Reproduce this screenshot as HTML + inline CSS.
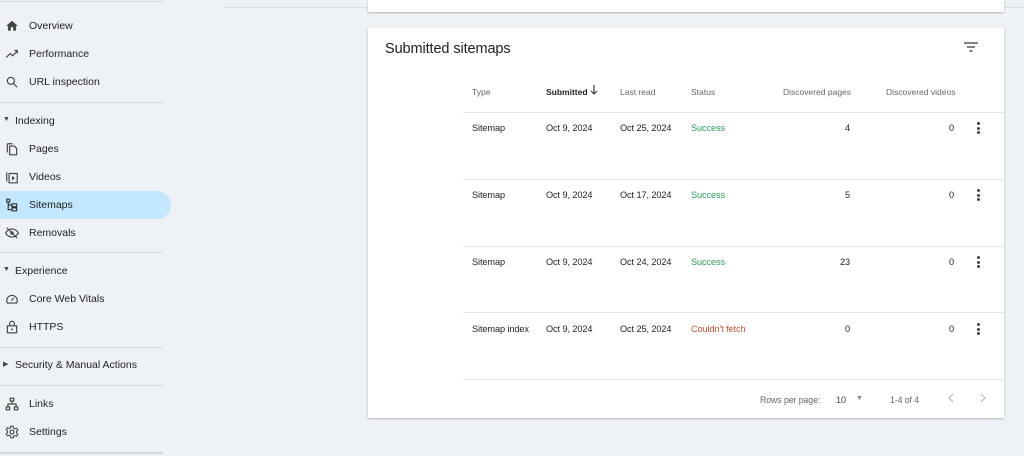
<!DOCTYPE html>
<html><head><meta charset="utf-8"><style>
*{margin:0;padding:0;box-sizing:border-box}
body{width:1024px;height:456px;overflow:hidden;background:#eef2f6;font-family:"Liberation Sans",Arial,sans-serif;color:#1f1f1f;position:relative}
.side{position:absolute;left:0;top:0;width:180px;height:456px;background:#eef2f6}
.hr{position:absolute;left:0;width:163px;height:1px;background:#d6dbe0}
.item{position:absolute;left:0;height:28px;width:171px;display:flex;align-items:center;font-size:10.5px;color:#1f1f1f}
.item svg{position:absolute;left:5px;top:7px;width:14px;height:14px}
.item span{position:absolute;left:29px;top:8px}
.sel{background:#c2e7ff;border-radius:0 14px 14px 0}
.sec{position:absolute;left:0;height:20px;font-size:10.5px;color:#1f1f1f}
.sec i{position:absolute;left:3px;top:5px;font-style:normal;font-size:7px;color:#444}
.sec span{position:absolute;left:15px;top:4px;white-space:nowrap}
.card{position:absolute;background:#fff;box-shadow:0 1px 2px rgba(0,0,0,.25)}
.t{position:absolute;font-size:9.2px;color:#222;white-space:nowrap;letter-spacing:-.1px}
.h{position:absolute;font-size:8.5px;color:#666;white-space:nowrap;top:87px}
.line{position:absolute;left:463px;width:541px;height:1px;background:#e4e6e8}
.dots{position:absolute;left:977px;width:4px}
.dots b{display:block;width:3px;height:3px;border-radius:50%;background:#444;margin-bottom:1.6px}
</style></head><body>
<div class="side">
<div class="hr" style="top:1px"></div>
<div class="item" style="top:12px"><svg viewBox="0 0 24 24"><path d="M10 20v-6h4v6h5v-8h3L12 3 2 12h3v8z" fill="#444"/></svg><span>Overview</span></div>
<div class="item" style="top:40px"><svg viewBox="0 0 24 24"><path d="M2 18l7-7 4 4 8-8M16 6h5v5" stroke="#444" stroke-width="2" fill="none"/></svg><span>Performance</span></div>
<div class="item" style="top:68px"><svg viewBox="0 0 24 24"><circle cx="10" cy="10" r="6" stroke="#444" stroke-width="2" fill="none"/><path d="M14.5 14.5L21 21" stroke="#444" stroke-width="2"/></svg><span>URL inspection</span></div>
<div class="hr" style="top:102px"></div>
<div class="sec" style="top:111px"><i>▼</i><span>Indexing</span></div>
<div class="item" style="top:135px"><svg viewBox="0 0 24 24"><path d="M4 3h9M4 3v15M8 7h8l4 4v11H8z" stroke="#444" stroke-width="2" fill="none"/></svg><span>Pages</span></div>
<div class="item" style="top:163px"><svg viewBox="0 0 24 24"><path d="M3 4v16M7 6h14v16H7z" stroke="#444" stroke-width="2" fill="none"/><path d="M12 10v8l5-4z" fill="#444"/></svg><span>Videos</span></div>
<div class="item sel" style="top:191px"><svg viewBox="0 0 24 24"><path d="M3 2h5v5H3zM12 10h8v5h-8zM12 17h8v5h-8zM5.5 7v13H12M5.5 12H12" stroke="#333" stroke-width="2" fill="none"/></svg><span>Sitemaps</span></div>
<div class="item" style="top:219px"><svg viewBox="0 0 24 24"><path d="M1 12s4-7 11-7 11 7 11 7-4 7-11 7S1 12 1 12z" stroke="#444" stroke-width="2" fill="none"/><circle cx="12" cy="12" r="3" fill="#444"/><path d="M3 3l18 18" stroke="#444" stroke-width="2"/></svg><span>Removals</span></div>
<div class="hr" style="top:252px"></div>
<div class="sec" style="top:261px"><i>▼</i><span>Experience</span></div>
<div class="item" style="top:285px"><svg viewBox="0 0 24 24"><path d="M4 19a9 9 0 1 1 16 0z" stroke="#444" stroke-width="2" fill="none"/><path d="M11 15l4-5" stroke="#444" stroke-width="2"/></svg><span>Core Web Vitals</span></div>
<div class="item" style="top:313px"><svg viewBox="0 0 24 24"><rect x="4" y="10" width="16" height="12" stroke="#444" stroke-width="2" fill="none"/><path d="M8 10V6a4 4 0 0 1 8 0v4" stroke="#444" stroke-width="2" fill="none"/><circle cx="12" cy="16" r="1.6" fill="#444"/></svg><span>HTTPS</span></div>
<div class="hr" style="top:347px"></div>
<div class="sec" style="top:355px"><i>▶</i><span>Security &amp; Manual Actions</span></div>
<div class="hr" style="top:385px"></div>
<div class="item" style="top:390px"><svg viewBox="0 0 24 24"><path d="M9 2h6v5H9zM2 17h6v5H2zM16 17h6v5h-6zM12 7v5M5 17v-5h14v5" stroke="#444" stroke-width="2" fill="none"/></svg><span>Links</span></div>
<div class="item" style="top:418px"><svg viewBox="0 0 24 24"><circle cx="12" cy="12" r="3.5" stroke="#444" stroke-width="2" fill="none"/><path d="M10 2h4l.6 3 2.6 1.5 2.9-1 2 3.5-2.3 2v3l2.3 2-2 3.5-2.9-1L14.6 19l-.6 3h-4l-.6-3-2.6-1.5-2.9 1-2-3.5 2.3-2v-3l-2.3-2 2-3.5 2.9 1L9.4 5z" stroke="#444" stroke-width="1.8" fill="none"/></svg><span>Settings</span></div>
<div class="hr" style="top:452px;height:2px"></div>
</div>
<div style="position:absolute;left:225px;top:7px;width:799px;height:1px;background:#d8dde2"></div>
<div class="card" style="left:368px;top:0;width:636px;height:12px"></div>
<div class="card" style="left:368px;top:28px;width:636px;height:390px"></div>
<div class="t" style="left:385px;top:41px;font-size:14.5px;color:#202124">Submitted sitemaps</div>
<svg style="position:absolute;left:964px;top:42px" width="14" height="10" viewBox="0 0 14 10"><path d="M0 1h14M3 5h8M5.5 9h3" stroke="#555" stroke-width="1.5"/></svg>
<div class="h" style="left:472px">Type</div>
<div class="h" style="left:546px;color:#222;font-weight:bold">Submitted</div>
<svg style="position:absolute;left:590px;top:85px" width="8" height="10" viewBox="0 0 8 10"><path d="M4 0v9M1 6l3 3 3-3" stroke="#333" stroke-width="1.1" fill="none"/></svg>
<div class="h" style="left:620px">Last read</div>
<div class="h" style="left:691px">Status</div>
<div class="h" style="left:783px">Discovered pages</div>
<div class="h" style="left:886px">Discovered videos</div>
<div class="line" style="top:112px"></div>
<div class="line" style="top:179px"></div>
<div class="line" style="top:246px"></div>
<div class="line" style="top:312px"></div>
<div class="line" style="top:379px"></div>

<div class="t" style="left:472px;top:123px">Sitemap</div><div class="t" style="left:546px;top:123px">Oct 9, 2024</div><div class="t" style="left:620px;top:123px">Oct 25, 2024</div><div class="t" style="left:691px;top:123px;color:#2e9a5a">Success</div><div class="t" style="left:800px;width:50px;text-align:right;top:123px">4</div><div class="t" style="left:904px;width:50px;text-align:right;top:123px">0</div><div class="dots" style="top:122px"><b></b><b></b><b></b></div>

<div class="t" style="left:472px;top:190px">Sitemap</div><div class="t" style="left:546px;top:190px">Oct 9, 2024</div><div class="t" style="left:620px;top:190px">Oct 17, 2024</div><div class="t" style="left:691px;top:190px;color:#2e9a5a">Success</div><div class="t" style="left:800px;width:50px;text-align:right;top:190px">5</div><div class="t" style="left:904px;width:50px;text-align:right;top:190px">0</div><div class="dots" style="top:189px"><b></b><b></b><b></b></div>

<div class="t" style="left:472px;top:257px">Sitemap</div><div class="t" style="left:546px;top:257px">Oct 9, 2024</div><div class="t" style="left:620px;top:257px">Oct 24, 2024</div><div class="t" style="left:691px;top:257px;color:#2e9a5a">Success</div><div class="t" style="left:800px;width:50px;text-align:right;top:257px">23</div><div class="t" style="left:904px;width:50px;text-align:right;top:257px">0</div><div class="dots" style="top:256px"><b></b><b></b><b></b></div>

<div class="t" style="left:472px;top:324px">Sitemap index</div><div class="t" style="left:546px;top:324px">Oct 9, 2024</div><div class="t" style="left:620px;top:324px">Oct 25, 2024</div><div class="t" style="left:691px;top:324px;color:#c4503a">Couldn't fetch</div><div class="t" style="left:800px;width:50px;text-align:right;top:324px">0</div><div class="t" style="left:904px;width:50px;text-align:right;top:324px">0</div><div class="dots" style="top:323px"><b></b><b></b><b></b></div>

<div class="t" style="left:760px;top:395px;font-size:8.8px;color:#666">Rows per page:</div>
<div class="t" style="left:836px;top:395px;color:#444">10</div>
<div class="t" style="left:856px;top:395px;font-size:7px;color:#888">▼</div>
<div class="t" style="left:890px;top:395px;font-size:8.8px;color:#666">1-4 of 4</div>
<svg style="position:absolute;left:948px;top:393px" width="6" height="10" viewBox="0 0 6 10"><path d="M5 1L1 5l4 4" stroke="#bbb" stroke-width="1.2" fill="none"/></svg>
<svg style="position:absolute;left:980px;top:393px" width="6" height="10" viewBox="0 0 6 10"><path d="M1 1l4 4-4 4" stroke="#bbb" stroke-width="1.2" fill="none"/></svg>
</body></html>
